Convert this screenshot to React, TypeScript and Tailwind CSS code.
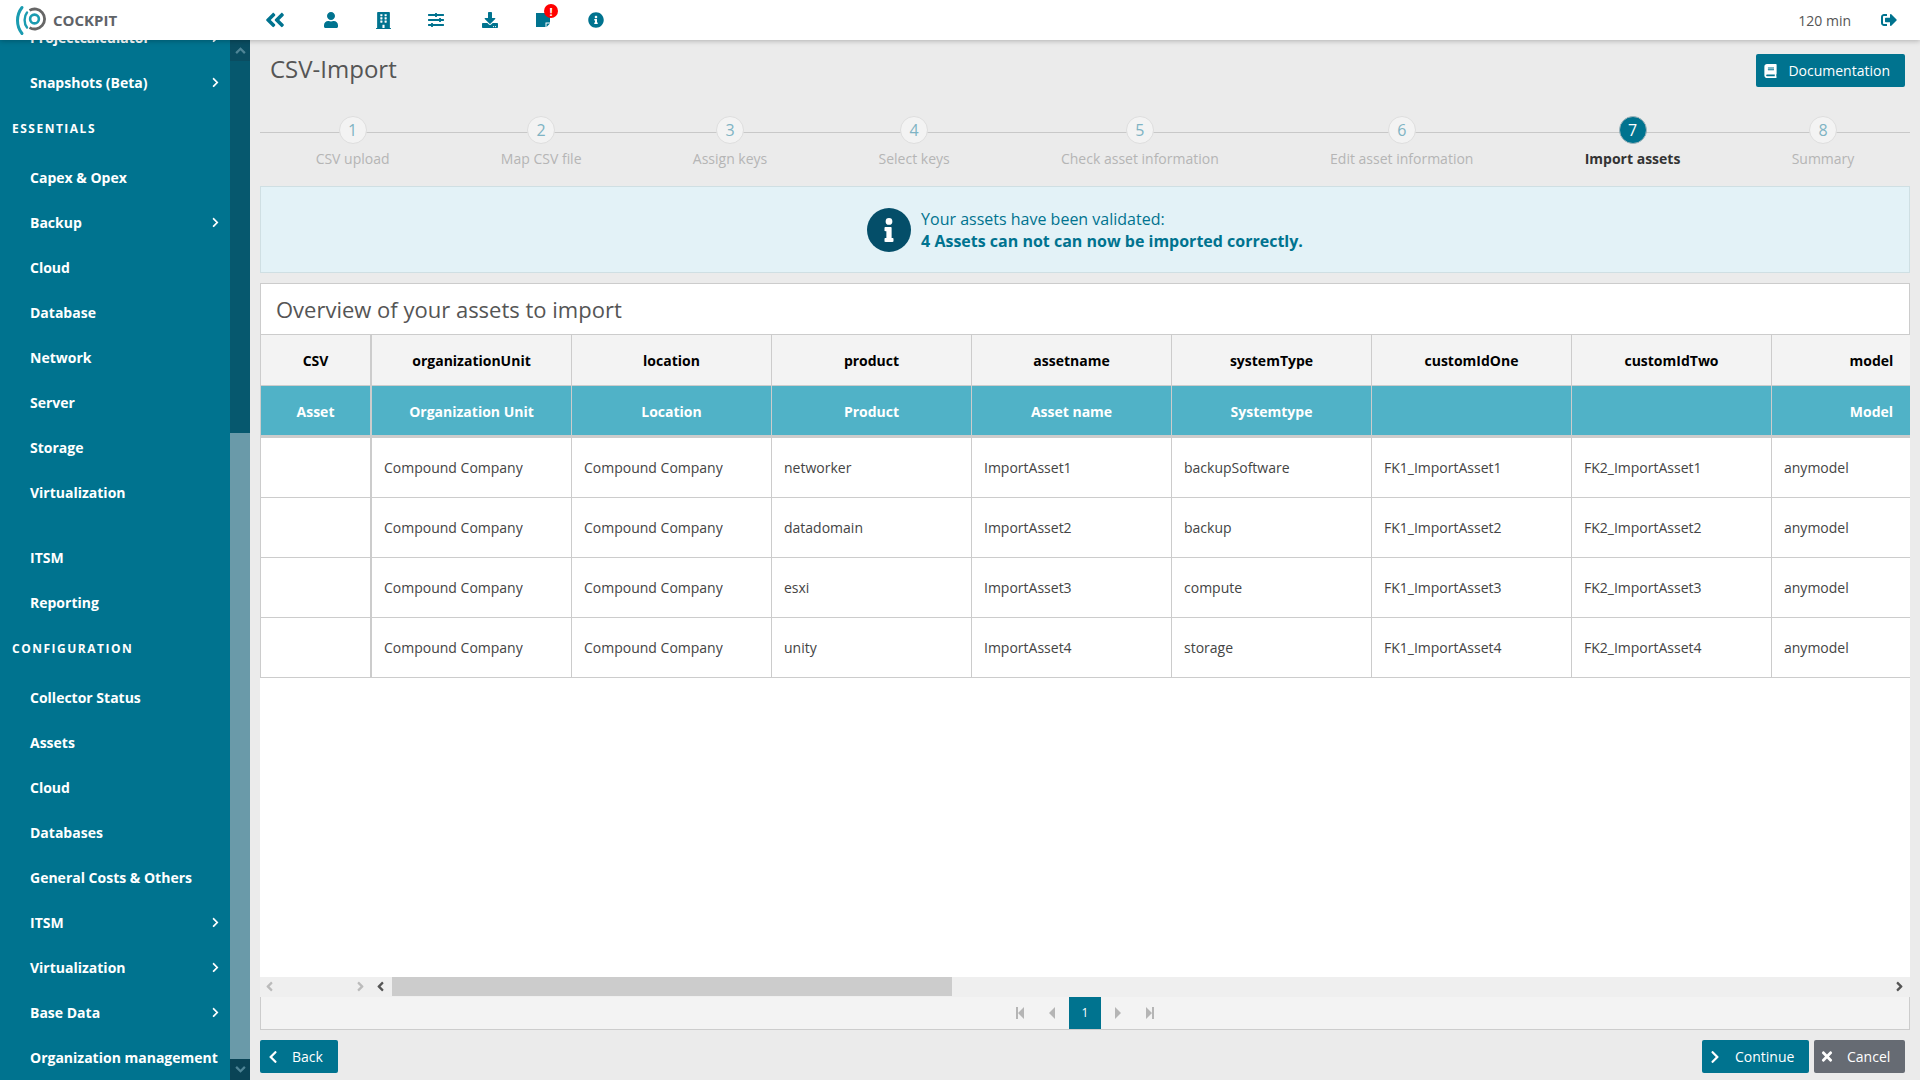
import React from "react";
import {
  FaAngleDoubleLeft, FaUser, FaBuilding, FaSlidersH, FaDownload, FaInfoCircle,
  FaSignOutAlt, FaBook, FaChevronLeft, FaChevronRight, FaTimes, FaAngleLeft, FaAngleRight,
} from "react-icons/fa";

const font = { fontFamily: '"Open Sans", sans-serif' };

type Item = { t: string; sub?: boolean; gap?: boolean };

const top: Item[] = [{ t: "Projectcalculator", sub: true }, { t: "Snapshots (Beta)", sub: true }];
const essentials: Item[] = [
  { t: "Capex & Opex" },
  { t: "Backup", sub: true },
  { t: "Cloud" },
  { t: "Database" },
  { t: "Network" },
  { t: "Server" },
  { t: "Storage" },
  { t: "Virtualization" },
  { t: "ITSM", gap: true },
  { t: "Reporting" },
];
const config: Item[] = [
  { t: "Collector Status" },
  { t: "Assets" },
  { t: "Cloud" },
  { t: "Databases" },
  { t: "General Costs & Others" },
  { t: "ITSM", sub: true },
  { t: "Virtualization", sub: true },
  { t: "Base Data", sub: true },
  { t: "Organization management" },
];

function NavItem({ item }: { item: Item }) {
  return (
    <div className={`flex h-[45px] shrink-0 items-center justify-between pl-[30px] pr-[9px] text-[14px] font-bold text-white ${item.gap ? "mt-[20px]" : ""}`}>
      <span className="whitespace-nowrap">{item.t}</span>
      {item.sub && <FaChevronRight className="h-[11px] w-[11px]" />}
    </div>
  );
}

function SectionHead({ t, cls }: { t: string; cls: string }) {
  return <div className={`pl-[12px] text-[12px] font-bold tracking-[1.5px] text-white ${cls}`}>{t}</div>;
}

function Sidebar() {
  return (
    <aside className="flex h-full w-[250px] shrink-0 bg-[#00738f]">
      <nav className="flex h-full w-[230px] shrink-0 flex-col overflow-hidden">
        <div className="mt-[-25px] flex flex-col">
          {top.map((i) => <NavItem key={i.t} item={i} />)}
          <SectionHead t="ESSENTIALS" cls="flex h-[50px] items-center pb-[3px]" />
          {essentials.map((i) => <NavItem key={i.t} item={i} />)}
          <SectionHead t="CONFIGURATION" cls="flex h-[50px] items-center pb-[3px]" />
          {config.map((i, n) => <NavItem key={i.t + n} item={i} />)}
        </div>
      </nav>
      <div className="flex h-full w-[20px] shrink-0 flex-col bg-[#06586e]">
        <div className="flex h-[21px] items-center justify-center bg-[#0a4d61]">
          <svg viewBox="0 0 12 8" className="h-[7px] w-[11px]" fill="none" stroke="#4f8596" strokeWidth="2.6"><path d="M1 7l5-5 5 5" /></svg>
        </div>
        <div className="flex-1" />
        <div className="h-[626px] w-[20px] bg-[#6a9aa9]" />
        <div className="flex h-[21px] items-center justify-center bg-[#0a4456]">
          <svg viewBox="0 0 12 8" className="h-[7px] w-[11px]" fill="none" stroke="#4f8596" strokeWidth="2.6"><path d="M1 1l5 5 5-5" /></svg>
        </div>
      </div>
    </aside>
  );
}

function Logo() {
  return (
    <svg viewBox="0 0 32 32" className="h-[32px] w-[32px] shrink-0">
      <path d="M7 3.5C1 11 1 22 7 29.5" fill="none" stroke="#1a9bb0" strokeWidth="3" strokeLinecap="round" />
      <path d="M12 8.5C8.8 12.5 8.8 19.5 12 23.5" fill="none" stroke="#1a9bb0" strokeWidth="2.4" strokeLinecap="round" />
      <path d="M14.5 6.4A10 10 0 1 1 14.5 23.6" fill="none" stroke="#666" strokeWidth="2.8" />
      <circle cx="19.5" cy="15" r="4.4" fill="none" stroke="#1a9bb0" strokeWidth="2.6" />
    </svg>
  );
}

function Header() {
  return (
    <header className="relative z-10 flex h-[40px] shrink-0 items-center bg-white text-[#00738f] shadow-[0_1px_5px_rgba(0,0,0,0.25)]">
      <div className="flex w-[250px] shrink-0 items-center pl-[15px]">
        <Logo />
        <span className="ml-[6px] text-[15px] font-bold text-[#5f6368]">COCKPIT</span>
      </div>
      <div className="ml-[15px] flex items-center">
        <div className="flex w-[20px] justify-center"><FaAngleDoubleLeft className="h-[24px] w-[24px]" /></div>
        <div className="ml-[36px] flex w-[20px] justify-center"><FaUser className="h-[16px] w-[16px]" /></div>
        <div className="ml-[32px] flex w-[20px] justify-center"><FaBuilding className="h-[17px] w-[17px]" /></div>
        <div className="ml-[33px] flex w-[20px] justify-center"><FaSlidersH className="h-[16px] w-[16px]" /></div>
        <div className="ml-[34px] flex w-[20px] justify-center"><FaDownload className="h-[16px] w-[16px]" /></div>
        <div className="relative ml-[33px] flex w-[20px] justify-center">
          <svg viewBox="0 0 14 14" className="h-[14px] w-[14px]" fill="currentColor"><path d="M0 0h14v9.5H9.5V14H0zM10.5 10.5H14L10.5 14z" /></svg>
          <span className="absolute right-[-5px] top-[-9px] flex h-[14px] w-[14px] items-center justify-center rounded-full bg-[#ff0000] text-[11px] font-bold leading-none text-white">!</span>
        </div>
        <div className="ml-[33px] flex w-[20px] justify-center"><FaInfoCircle className="h-[16px] w-[16px]" /></div>
      </div>
      <span className="ml-auto text-[14px] text-[#555]">120 min</span>
      <FaSignOutAlt className="ml-[30px] mr-[23px] h-[16px] w-[16px]" />
    </header>
  );
}

const steps = ["CSV upload", "Map CSV file", "Assign keys", "Select keys", "Check asset information", "Edit asset information", "Import assets", "Summary"];

function Stepper() {
  return (
    <div className="relative mt-[30px] flex h-[69px] shrink-0">
      <div className="absolute left-0 right-0 top-[15px] h-px bg-[#c8c8c8]" />
      {steps.map((s, i) => {
        const active = i === 6;
        return (
          <div key={s} className="relative flex flex-auto flex-col items-center">
            <div className={`-mt-px flex h-[28px] w-[28px] items-center justify-center rounded-full border text-[16px] ${active ? "border-[#9fb4bb] bg-[#00738f] text-white" : "border-[#dedede] bg-[#f3f3f3] text-[#7fb3c4]"}`}>{i + 1}</div>
            <div className={`mt-[4px] whitespace-nowrap text-[14px] ${active ? "font-bold text-[#333]" : "text-[#b5b5b5]"}`}>{s}</div>
          </div>
        );
      })}
    </div>
  );
}

const rows = [
  ["networker", "ImportAsset1", "backupSoftware", "FK1_ImportAsset1", "FK2_ImportAsset1"],
  ["datadomain", "ImportAsset2", "backup", "FK1_ImportAsset2", "FK2_ImportAsset2"],
  ["esxi", "ImportAsset3", "compute", "FK1_ImportAsset3", "FK2_ImportAsset3"],
  ["unity", "ImportAsset4", "storage", "FK1_ImportAsset4", "FK2_ImportAsset4"],
];
const head1 = ["organizationUnit", "location", "product", "assetname", "systemType", "customIdOne", "customIdTwo", "model"];
const head2 = ["Organization Unit", "Location", "Product", "Asset name", "Systemtype", "", "", "Model"];

function DataTable() {
  const td = "border-b border-r border-[#ccc] px-[12px] text-left text-[14px] font-normal text-[#444]";
  return (
    <div className="overflow-hidden border-l border-[#ccc]">
      <table className="w-[1711px] table-fixed border-separate border-spacing-0">
        <colgroup>
          <col className="w-[111px]" />
          {head1.map((h) => <col key={h} className="w-[200px]" />)}
        </colgroup>
        <thead>
          <tr className="h-[52px] bg-[#f3f3f3]">
            <th className="border-r-2 border-b border-t border-[#ccc] text-[14px] font-bold text-black">CSV</th>
            {head1.map((h) => <th key={h} className="border-r border-b border-t border-[#ccc] text-[14px] font-bold text-black">{h}</th>)}
          </tr>
          <tr className="h-[52px] bg-[#50b2c7]">
            <th className="border-b-[3px] border-r-2 border-[#ccc] pt-[2px] text-[14px] font-bold text-white">Asset</th>
            {head2.map((h, i) => <th key={i} className="border-b-[3px] border-r border-[#ccc] pt-[2px] text-[14px] font-bold text-white">{h}</th>)}
          </tr>
        </thead>
        <tbody>
          {rows.map((r) => (
            <tr key={r[0]} className="h-[60px] bg-white">
              <td className="border-b border-r-2 border-[#ccc]" />
              <td className={td}>Compound Company</td>
              <td className={td}>Compound Company</td>
              {r.map((c) => <td key={c} className={td}>{c}</td>)}
              <td className={td}>anymodel</td>
            </tr>
          ))}
        </tbody>
      </table>
    </div>
  );
}

function ScrollBar() {
  return (
    <div className="flex h-[20px] shrink-0 items-start bg-[#efefef]">
      <div className="flex h-[19px] w-[111px] shrink-0 items-center justify-between pl-[5px] pr-[6px] text-[#bbb]">
        <FaAngleLeft className="h-[15px] w-[9px]" />
        <FaAngleRight className="h-[15px] w-[9px]" />
      </div>
      <div className="ml-[5px] flex h-[19px] items-center">
        <FaAngleLeft className="h-[15px] w-[9px] shrink-0 text-[#555]" />
      </div>
      <div className="ml-[7px] h-[19px] w-[560px] bg-[#ccc]" />
      <div className="ml-auto mr-[6px] flex h-[19px] items-center">
        <FaAngleRight className="h-[15px] w-[9px] text-[#555]" />
      </div>
    </div>
  );
}

function Pager() {
  return (
    <div className="flex h-[33px] shrink-0 items-center justify-center border-b border-l border-r border-[#ccc] bg-[#f3f3f3]">
      <svg viewBox="0 0 8 12" className="h-[12px] w-[8px]" fill="#b5b5b5"><path d="M0 0h2v12H0zM8 0v12L2 6z" /></svg>
      <svg viewBox="0 0 6 12" className="ml-[25px] h-[12px] w-[6px]" fill="#b5b5b5"><path d="M6 0v12L0 6z" /></svg>
      <div className="ml-[14px] flex h-full w-[32px] items-center justify-center bg-[#00738f] text-[12px] text-white">1</div>
      <svg viewBox="0 0 6 12" className="ml-[14px] h-[12px] w-[6px]" fill="#b5b5b5"><path d="M0 0v12l6-6z" /></svg>
      <svg viewBox="0 0 8 12" className="ml-[25px] h-[12px] w-[8px]" fill="#b5b5b5"><path d="M0 0v12l6-6zM6 0h2v12H6z" /></svg>
    </div>
  );
}

function Btn({ icon, label, cls }: { icon: React.ReactNode; label: string; cls: string }) {
  return (
    <button className={`flex h-[33px] items-center rounded-[2px] text-[14px] text-white ${cls}`}>
      {icon}
      {label}
    </button>
  );
}

export default function App() {
  return (
    <div className="flex h-screen w-full flex-col overflow-hidden bg-[#ebebeb]" style={font}>
      <Header />
      <div className="flex min-h-0 flex-1">
        <Sidebar />
        <main className="flex min-w-0 flex-1 flex-col px-[10px]">
          <div className="flex h-[47px] shrink-0 items-end justify-between">
            <h1 className="mb-[2px] ml-[10px] text-[24px] leading-[33px] text-[#555]">CSV-Import</h1>
            <Btn
              cls="mr-[5px] bg-[#00738f] pl-[8px] pr-[15px]"
              label="Documentation"
              icon={<FaBook className="mr-[11px] h-[14px] w-[13px]" />}
            />
          </div>
          <Stepper />
          <div className="flex h-[87px] shrink-0 items-center justify-center border border-[#cfdfe3] bg-[#e3f2f7] text-[16px] leading-[22px] text-[#00738f]">
            <div className="mr-[10px] flex h-[44px] w-[44px] items-center justify-center rounded-full bg-[#044e69]">
              <svg viewBox="0 0 192 512" className="h-[24px] w-[10px]" fill="white"><path d="M20 424h20V280H20c-11 0-20-9-20-20v-48c0-11 9-20 20-20h112c11 0 20 9 20 20v212h20c11 0 20 9 20 20v48c0 11-9 20-20 20H20c-11 0-20-9-20-20v-48c0-11 9-20 20-20zM96 0a72 72 0 1 0 0 144A72 72 0 0 0 96 0z" /></svg>
            </div>
            <div>
              <div>Your assets have been validated:</div>
              <div className="font-bold">4 Assets can not can now be imported correctly.</div>
            </div>
          </div>
          <section className="mt-[10px] flex min-h-0 flex-1 flex-col bg-white">
            <div className="flex h-[51px] shrink-0 items-center border-l border-r border-t border-[#ccc] pl-[15px] text-[22px] text-[#555]">Overview of your assets to import</div>
            <DataTable />
            <div className="min-h-0 flex-1" />
            <ScrollBar />
            <Pager />
          </section>
          <div className="mb-[7px] mt-[10px] flex shrink-0 items-center">
            <Btn cls="w-[78px] bg-[#00738f] pl-[7px]" label="Back" icon={<FaChevronLeft className="mr-[13px] h-[14px] w-[12px]" />} />
            <Btn cls="ml-auto w-[107px] bg-[#00738f] pl-[7px]" label="Continue" icon={<FaChevronRight className="mr-[14px] h-[14px] w-[12px]" />} />
            <Btn cls="ml-[5px] mr-[5px] w-[91px] bg-[#666b73] pl-[7px]" label="Cancel" icon={<FaTimes className="mr-[14px] h-[15px] w-[12px]" />} />
          </div>
        </main>
      </div>
    </div>
  );
}
